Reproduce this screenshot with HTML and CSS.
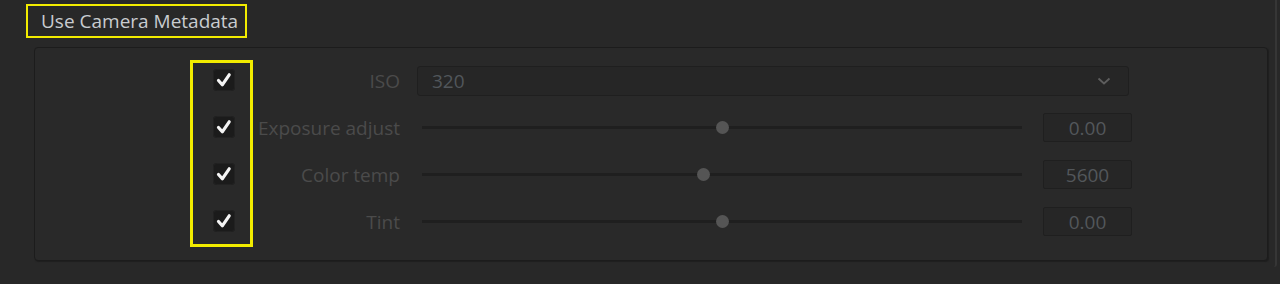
FILE: index.html
```html
<!DOCTYPE html>
<html>
<head>
<meta charset="utf-8">
<link rel="stylesheet" href="styles.css">
</head>
<body>
<div class="frame">
  <div class="title"><span>Use Camera Metadata</span></div>
  <div class="panel">
    <div class="checks">
      <div class="cb"><svg viewBox="0 0 22 22" width="22" height="22"><path d="M5.5 11.5 L9.3 15.8 L16.2 5.8" fill="none" stroke="#f4f4f4" stroke-width="3.2" stroke-linecap="round" stroke-linejoin="round"/></svg></div>
      <div class="cb"><svg viewBox="0 0 22 22" width="22" height="22"><path d="M5.5 11.5 L9.3 15.8 L16.2 5.8" fill="none" stroke="#f4f4f4" stroke-width="3.2" stroke-linecap="round" stroke-linejoin="round"/></svg></div>
      <div class="cb"><svg viewBox="0 0 22 22" width="22" height="22"><path d="M5.5 11.5 L9.3 15.8 L16.2 5.8" fill="none" stroke="#f4f4f4" stroke-width="3.2" stroke-linecap="round" stroke-linejoin="round"/></svg></div>
      <div class="cb"><svg viewBox="0 0 22 22" width="22" height="22"><path d="M5.5 11.5 L9.3 15.8 L16.2 5.8" fill="none" stroke="#f4f4f4" stroke-width="3.2" stroke-linecap="round" stroke-linejoin="round"/></svg></div>
    </div>
    <div class="fields">
      <div class="row">
        <div class="label">ISO</div>
        <div class="select">
          <span>320</span>
          <svg viewBox="0 0 14 8" width="14" height="8"><path d="M1.5 1.5 L7 6.5 L12.5 1.5" fill="none" stroke="#5e5e5e" stroke-width="1.8"/></svg>
        </div>
      </div>
      <div class="row">
        <div class="label">Exposure adjust</div>
        <div class="slider"><div class="track"></div><div class="thumb" style="left: 50%"></div></div>
        <div class="value">0.00</div>
      </div>
      <div class="row">
        <div class="label">Color temp</div>
        <div class="slider"><div class="track"></div><div class="thumb" style="left: 46.8%"></div></div>
        <div class="value">5600</div>
      </div>
      <div class="row">
        <div class="label">Tint</div>
        <div class="slider"><div class="track"></div><div class="thumb" style="left: 50%"></div></div>
        <div class="value">0.00</div>
      </div>
    </div>
  </div>
</div>
</body>
</html>
```
FILE: styles.css
```css
html, body {
  margin: 0;
  padding: 0;
  background: #282828;
  width: 1280px;
  height: 284px;
  overflow: hidden;
  font-family: "Open Sans", "Noto Sans", sans-serif;
}
.frame {
  width: 1277px;
  height: 267px;
  border-right: 2px solid #363636;
  border-bottom-right-radius: 3px;
  box-sizing: border-box;
  padding-top: 4px;
}
.title {
  margin-left: 26px;
  width: 221px;
  height: 34px;
  box-sizing: border-box;
  border: 2px solid #f2ec00;
  padding-left: 13px;
  display: flex;
  align-items: center;
  color: #c9ccd0;
  font-size: 19px;
  white-space: nowrap;
}
.panel {
  margin-left: 34px;
  margin-top: 9px;
  width: 1234px;
  height: 214px;
  box-sizing: border-box;
  border: 1px solid #1c1c1c;
  border-radius: 4px;
  box-shadow: 1px 1px 1px #1e1e1e;
  background: #292929;
  display: flex;
  align-items: flex-start;
}
.checks {
  margin-left: 155px;
  margin-top: 12px;
  width: 63px;
  height: 187px;
  box-sizing: border-box;
  border: 3px solid #f2ec00;
  padding: 6px 0 0 20px;
  display: flex;
  flex-direction: column;
  gap: 25px;
}
.cb {
  width: 22px;
  height: 22px;
  background: #1b1b1b;
  border-radius: 4px;
  box-shadow: inset 0 0 0 1px #222;
}
.cb svg { display: block; }
.fields {
  margin-top: 9px;
  display: flex;
  flex-direction: column;
}
.row {
  height: 47px;
  display: flex;
  align-items: center;
}
.label {
  width: 147px;
  display: flex;
  justify-content: flex-end;
  white-space: nowrap;
  color: #4b4b4b;
  font-size: 19px;
}
.select {
  margin-left: 17px;
  width: 712px;
  height: 30px;
  box-sizing: border-box;
  border: 1px solid #1f1f1f;
  border-radius: 3px;
  background: #262626;
  display: flex;
  align-items: center;
  justify-content: space-between;
  padding: 0 17px 0 14px;
  color: #51565b;
  font-size: 19px;
}
.select svg { display: block; }
.slider {
  position: relative;
  margin-left: 22px;
  width: 600px;
  height: 14px;
}
.track {
  position: absolute;
  left: 0;
  right: 0;
  top: 5px;
  height: 3px;
  background: #1f1f1f;
}
.thumb {
  position: absolute;
  top: 0;
  width: 13px;
  height: 13px;
  margin-left: -6px;
  border-radius: 50%;
  background: #555555;
}
.value {
  margin-left: 21px;
  width: 89px;
  height: 29px;
  box-sizing: border-box;
  border: 1px solid #1f1f1f;
  border-radius: 2px;
  background: #262626;
  display: flex;
  align-items: center;
  justify-content: center;
  color: #53575b;
  font-size: 19px;
}
```
